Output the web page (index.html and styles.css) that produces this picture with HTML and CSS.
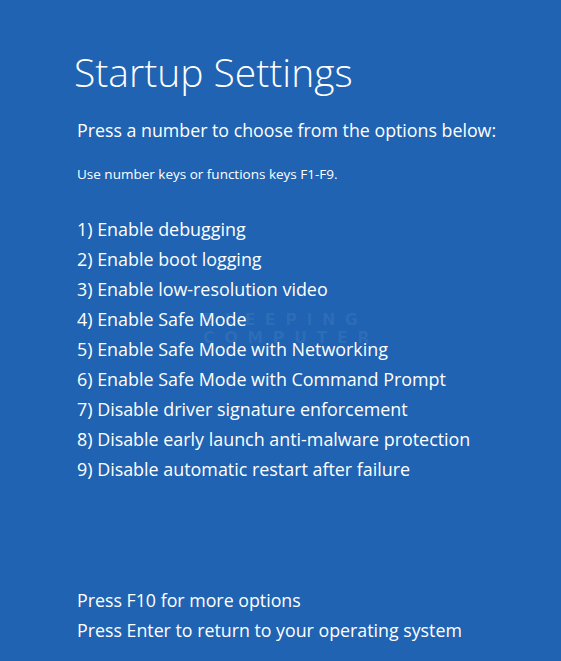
FILE: index.html
```html
<!DOCTYPE html>
<html>
<head>
<meta charset="utf-8">
<link rel="stylesheet" href="styles.css">
</head>
<body>
<main class="screen">
  <h1 class="title">Startup Settings</h1>
  <p class="lead">Press a number to choose from the options below:</p>
  <p class="hint">Use number keys or functions keys F1-F9.</p>
  <ol class="options">
    <li>1) Enable debugging</li>
    <li>2) Enable boot logging</li>
    <li>3) Enable low-resolution video</li>
    <li>4) Enable Safe Mode</li>
    <li>5) Enable Safe Mode with Networking</li>
    <li>6) Enable Safe Mode with Command Prompt</li>
    <li>7) Disable driver signature enforcement</li>
    <li>8) Disable early launch anti-malware protection</li>
    <li>9) Disable automatic restart after failure</li>
  </ol>
  <div class="footer">
    <p>Press F10 for more options</p>
    <p>Press Enter to return to your operating system</p>
  </div>
  <div class="watermark" aria-hidden="true"><span>BLEEPING</span><span>COMPUTER</span></div>
</main>
</body>
</html>
```
FILE: styles.css
```css
html, body {
  margin: 0;
  padding: 0;
  background: #2063b2;
}
.screen {
  position: relative;
  width: 561px;
  height: 661px;
  box-sizing: border-box;
  padding: 46px 0 0 77px;
  color: #ffffff;
  font-family: "Open Sans", "Noto Sans", sans-serif;
}
.title {
  margin: 0 0 0 -3px;
  font-size: 39px;
  font-weight: 300;
  line-height: 52px;
}
.lead {
  margin: 19px 0 0;
  font-size: 17.8px;
  line-height: 26px;
}
.hint {
  margin: 22px 0 0;
  font-size: 13.5px;
  line-height: 18px;
}
.options {
  list-style: none;
  margin: 31px 0 0;
  padding: 0;
  font-size: 17.9px;
  line-height: 30px;
}
.footer {
  margin-top: 101px;
  font-size: 17.8px;
  line-height: 30px;
}
.footer p { margin: 0; }
.watermark {
  position: absolute;
  left: 203px;
  top: 311px;
  display: flex;
  flex-direction: column;
  font-family: "DejaVu Sans", sans-serif;
  font-weight: 700;
  font-size: 16px;
  line-height: 18px;
  letter-spacing: 9.5px;
  color: rgba(255,255,255,0.07);
}
```
